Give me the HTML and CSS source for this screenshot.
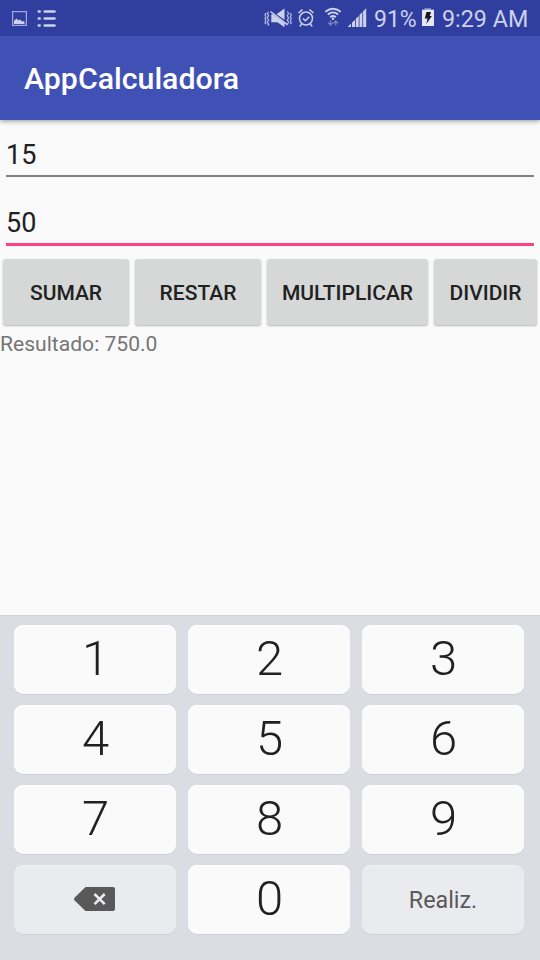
FILE: index.html
```html
<!DOCTYPE html>
<html lang="es">
<head>
<meta charset="utf-8">
<title>AppCalculadora</title>
<link rel="stylesheet" href="styles.css">
</head>
<body>
<div class="status">
  <svg class="image" width="16" height="36" viewBox="12 0 16 36"><rect x="12.6" y="11.6" width="13.8" height="13.8" fill="none" stroke="#a2a9da" stroke-width="1.2"/><path d="M14 24v-3l2.500-2.500 2 2 1.500-1 2 2 2-.5.5 1V24z" fill="#cdd1ec"/></svg>
  <svg class="list" width="20" height="36" viewBox="37 0 20 36" fill="none" stroke="#cdd1ec" stroke-width="2.700" stroke-linecap="round"><path d="M38.800 11.500h.8M38.800 18.500h.8M38.800 25.500h.8M44.800 11.500h9.700M44.800 18.500h9.700M44.800 25.500h9.700"/></svg>
  <svg class="mute" width="28" height="36" viewBox="264 0 28 36"><path d="M271.300 14.200h1.500L284.500 23.300V27.200L277.500 22.300h-6.200zM276.500 14.200l8-5.700V19.800z" fill="#cdd1ec"/><path d="M270.500 11.500l17 13.300" stroke="#cdd1ec" stroke-width="1.500"/><path d="M268.700 11.800l-1.500 2 1.500 2-1.500 2.200 1.500 2.200-1.500 2 1.500 2.300-1 1M265.900 13l-1 1.800 1 1.800-1 2 1 2-1 2 1 1.500M287.300 11.500l1.300 2-1.300 2.200 1.300 2.200-1.300 2.200 1.300 2-1.300 2.400M290.300 13l1 1.800-1 1.800 1 2-1 2 1 2-1 1.500" fill="none" stroke="#b6bbe3" stroke-width="1.200"/></svg>
  <svg class="alarm" width="18" height="36" viewBox="297 0 18 36" fill="none" stroke="#cdd1ec" stroke-width="1.500"><circle cx="306" cy="18.500" r="6.500"/><path d="M303 18.500l2.300 2.200 4-4M298.500 13l4-3.300M313.500 13l-4-3.300M301.800 23.800l-2 2.800M310.200 23.800l2 2.800"/></svg>
  <svg class="wifi" width="18" height="36" viewBox="324 0 18 36" fill="none"><path d="M325.300 11.700q7.700-6 15.400 0M327.800 14.500q5.200-4.300 10.400 0M330.200 17.200q2.800-2.400 5.600 0" stroke="#cdd1ec" stroke-width="1.800"/><circle cx="333" cy="18.700" r="1.200" fill="#cdd1ec"/><path d="M330.500 20.500v4.500M328.300 22.800l2.200 2.300 2.200-2.300M335.700 25.500v-4.500M333.500 23.200l2.200-2.300 2.200 2.300" stroke="#7780c3" stroke-width="1.400"/></svg>
  <svg class="signal" width="19" height="36" viewBox="348 0 19 36" fill="#cdd1ec"><path d="M347.500 27l3.500-3.500V27zM352 22.500l3-2.500v7h-3zM355.800 18.700l2.900-2.700V27H355.800zM359.500 15L362.300 12v15h-2.800zM363.100 11.300l3.100-3.100V27h-3.100z"/></svg>
  <span class="percent">91%</span>
  <svg class="battery" width="12" height="36" viewBox="422 0 12 36"><path d="M424.500 8.200h6.500V10h-6.500z" fill="#8f97d0"/><path d="M422 9.700h12V26h-12z" fill="#e5e7f6"/><path d="M426.500 12h4.500l-1.300 4h2.200l-5.600 8 1.300-5.500h-2.800z" fill="#171923"/></svg>
  <span class="time">9:29 AM</span>
</div>
<header>AppCalculadora</header>
<main>
  <div class="field">15</div>
  <div class="field focused">50</div>
  <div class="actions">
    <button>SUMAR</button><button>RESTAR</button><button>MULTIPLICAR</button><button>DIVIDIR</button>
  </div>
  <p class="result">Resultado: 750.0</p>
</main>
<div class="keyboard">
  <div class="key">1</div><div class="key">2</div><div class="key">3</div>
  <div class="key">4</div><div class="key">5</div><div class="key">6</div>
  <div class="key">7</div><div class="key">8</div><div class="key">9</div>
  <div class="key special"><svg class="delete" width="42" height="24" viewBox="0 0 42 24"><path d="M11.500 0H39q2 0 2 2v20q0 2-2 2H11.500L.7 13.500Q-.7 12 .7 10.500z" fill="#595959"/><path d="M20.500 7l10.200 10.200M30.700 7L20.500 17.200" stroke="#eaebef" stroke-width="2.600"/></svg></div>
  <div class="key">0</div>
  <div class="key special done">Realiz.</div>
</div>
</body>
</html>
```
FILE: styles.css
```css
* { box-sizing: border-box; }
body {
  margin: 0;
  width: 540px;
  height: 960px;
  display: flex;
  flex-direction: column;
  overflow: hidden;
  background: #fafafa;
  font-family: Roboto, sans-serif;
  color: #212121;
}
svg { display: block; flex: none; }
.status {
  position: relative;
  z-index: 1;
  height: 36px;
  flex: none;
  display: flex;
  background: #303f9f;
  color: #cdd1ec;
  font-size: 23.3px;
  line-height: 38px;
  white-space: nowrap;
}
.image { margin-left: 12px; }
.list { margin-left: 9px; }
.mute { margin-left: 207px; }
.alarm { margin-left: 5px; }
.wifi { margin-left: 9px; }
.signal { margin-left: 6px; }
.percent { width: 48px; margin-left: 7px; padding-top: 1px; font-size: 23px; }
.time { margin-left: 8px; }
header {
  height: 84px;
  flex: none;
  padding-left: 24px;
  background: #3f51b5;
  color: #fff;
  font-size: 30.3px;
  font-weight: 500;
  line-height: 85px;
  box-shadow: 0 1px 5px rgba(0, 0, 0, .42);
}
main { flex: 1; }
.field {
  height: 57px;
  margin: 0 6px;
  padding-top: 19px;
  border-bottom: 2px solid #828282;
  font-size: 27px;
  line-height: 33px;
}
.focused {
  height: 69px;
  padding-top: 30px;
  border-bottom: 3px solid #ff4081;
}
.actions {
  display: grid;
  grid-template-columns: 126px 126px 161px 103px;
  gap: 6px;
  margin: 13px 3px 0;
}
button {
  height: 66px;
  padding: 2px 0 0;
  border: 0;
  border-radius: 3px;
  background: #d6d8d7;
  box-shadow: 0 1px 2px rgba(0, 0, 0, .28);
  color: #212121;
  font: 500 21px Roboto, sans-serif;
}
.result {
  margin: 6px 0 0;
  color: #757575;
  font-size: 21.1px;
  line-height: 25px;
}
.keyboard {
  height: 345px;
  flex: none;
  display: grid;
  grid-template-columns: repeat(3, 162px);
  grid-auto-rows: 69px;
  gap: 11px 12px;
  padding: 9px 14px;
  border-top: 1px solid #d2d5d9;
  background: #dbdde2;
}
.key {
  display: flex;
  align-items: center;
  justify-content: center;
  border-radius: 9px;
  background: #fafafa;
  box-shadow: 0 1px 0 #cdd1d7, inset 0 1px 0 #fff;
  padding: 0 0 1px 1px;
  font-size: 49px;
  font-weight: 300;
  line-height: 68px;
}
.special {
  padding: 0 0 1px;
  background: #eaebef;
  box-shadow: 0 1px 0 #cfd0d9, inset 0 1px 0 #f1f1f4;
  color: #595959;
}
.done {
  padding: 0;
  font-size: 23.3px;
  font-weight: 400;
}
```
